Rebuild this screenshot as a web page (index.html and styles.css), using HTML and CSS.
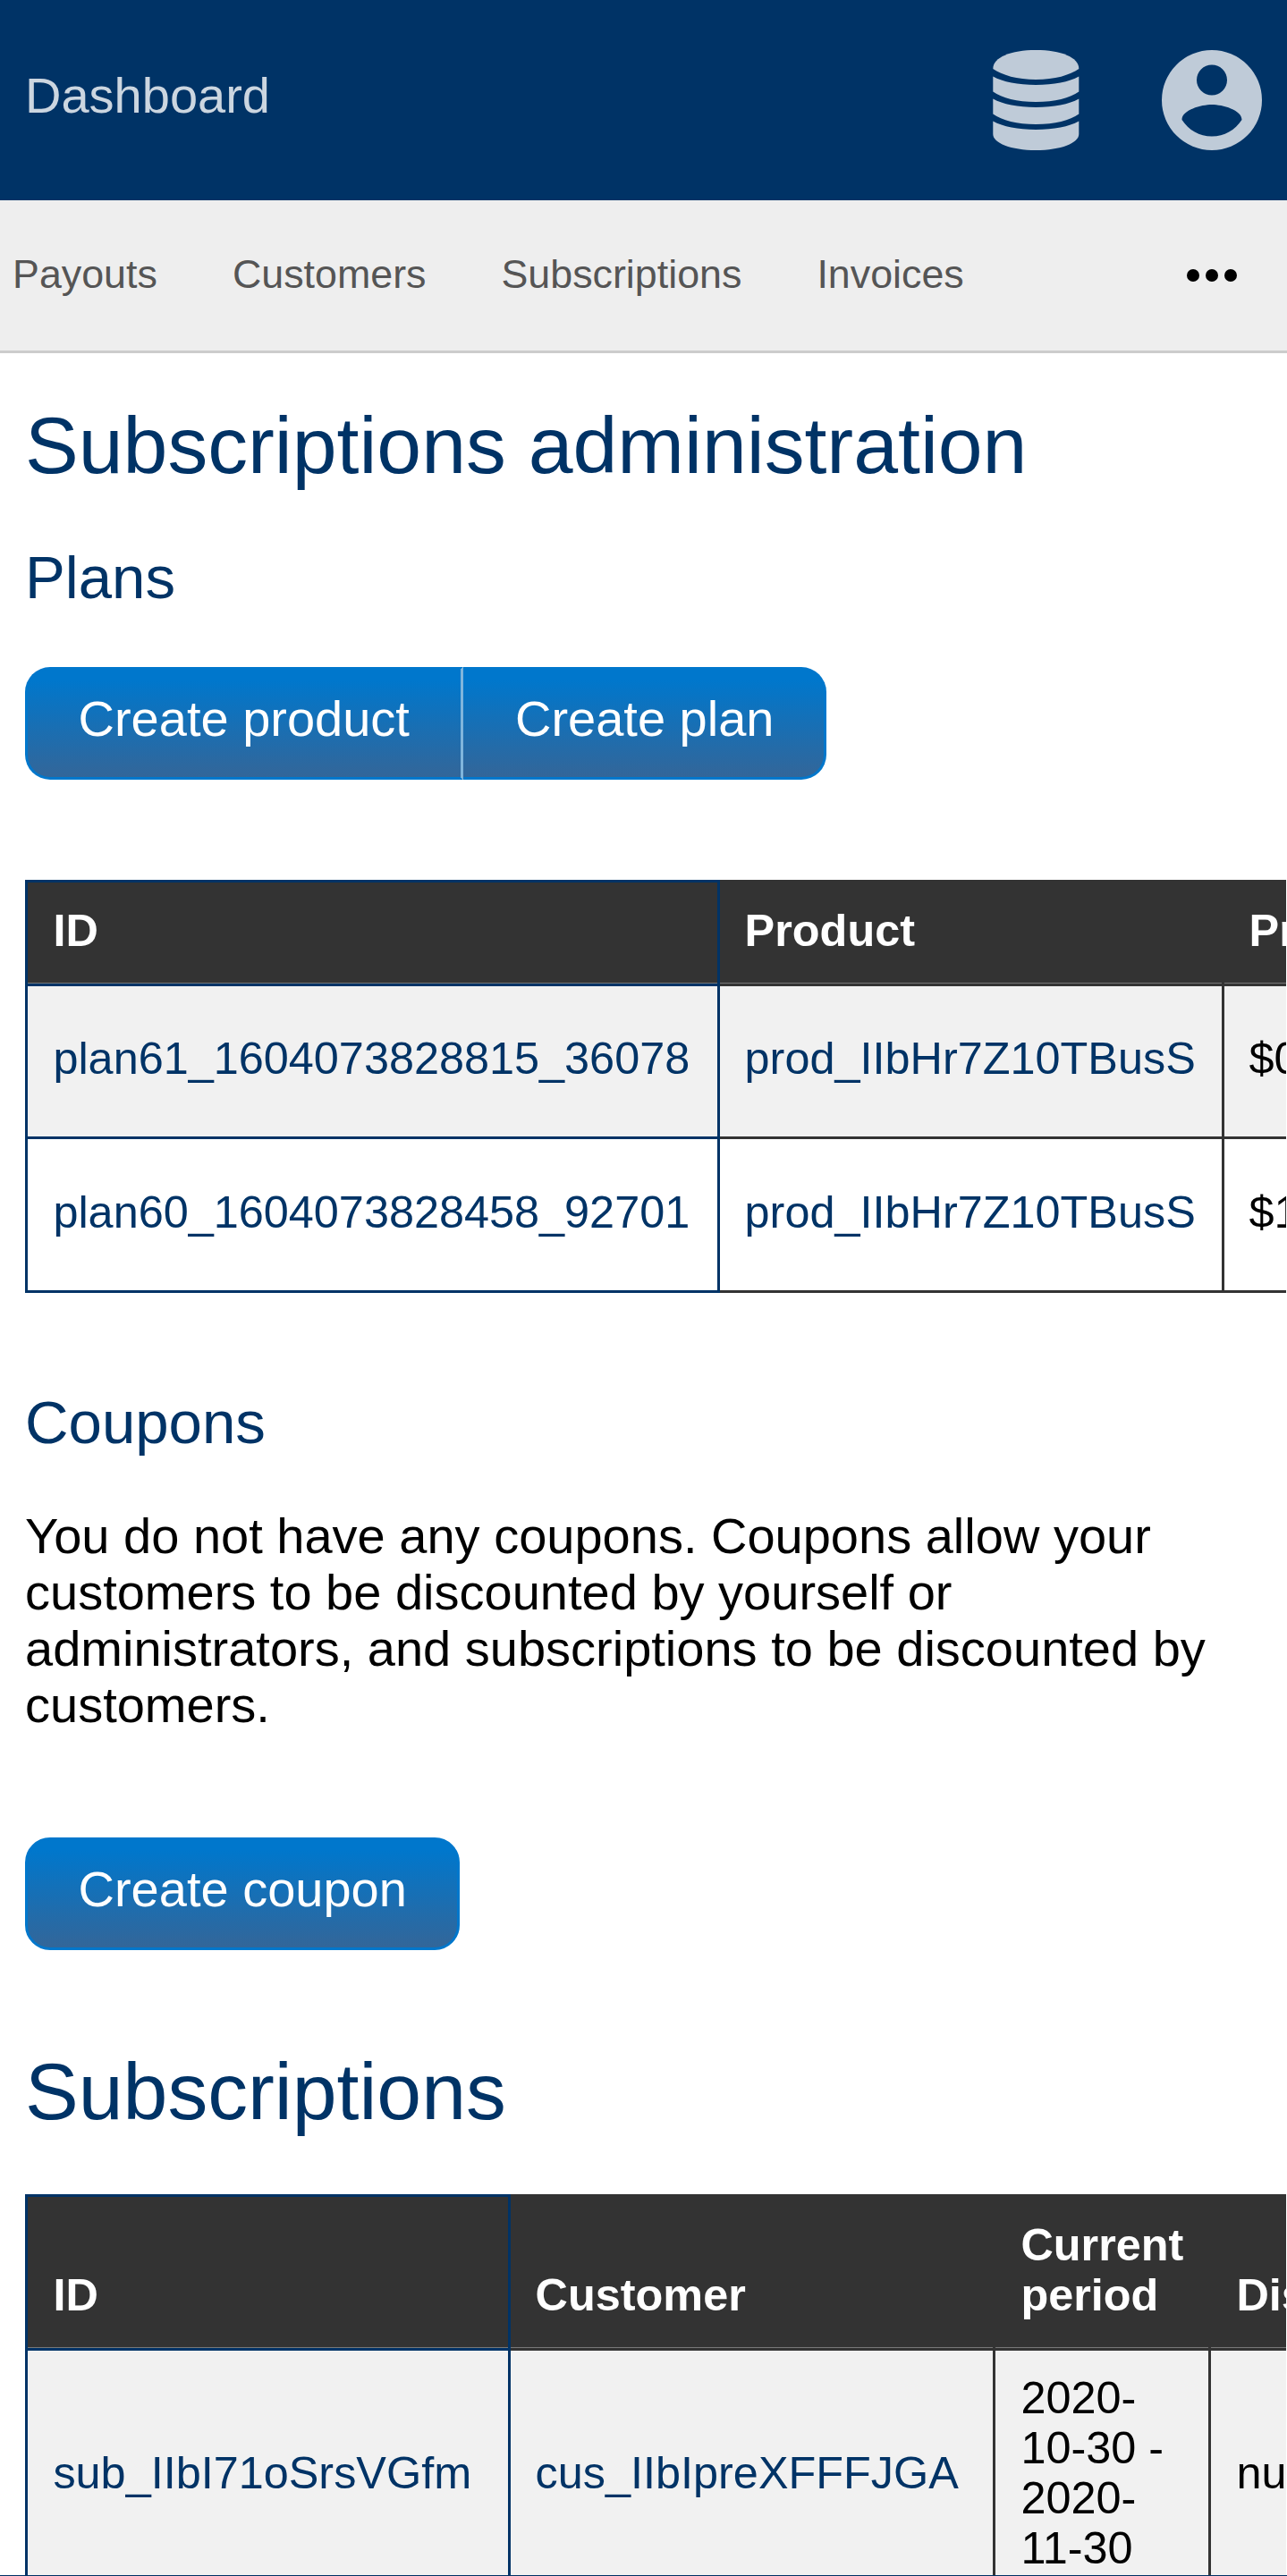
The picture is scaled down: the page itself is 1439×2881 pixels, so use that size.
FILE: index.html
```html
<!DOCTYPE html>
<html lang="en">
<head>
<meta charset="utf-8">
<title>Dashboard</title>
<link rel="stylesheet" href="styles.css">
</head>
<body>
<header class="topbar">
  <a class="brand">Dashboard</a>
  <div class="menus">
    <svg class="icon" viewBox="0 0 112 112"><g fill="#bfcbd8" transform="translate(-.7)"><path d="M8 21C8 8 28 0 56 0s48 8 48 21c-10 7-27 12-48 12S18 28 8 21z"/><path d="M8 29.500c11 6 28 9.500 48 9.500s37-3.500 48-9.500v17C94 53.500 77 58 56 58S18 53.500 8 46.500z"/><path d="M8 54.500c11 6 28 9.500 48 9.500s37-3.500 48-9.500v17C94 78.500 77 83 56 83S18 78.500 8 71.500z"/><path d="M8 79.500c11 6 28 9.500 48 9.500s37-3.500 48-9.500V94c0 10-20 18-48 18S8 104 8 94z"/></g></svg>
    <svg class="icon" viewBox="0 0 112 112"><path fill="#bfcbd8" fill-rule="evenodd" d="M56 0a56 56 0 1 0 0 112A56 56 0 1 0 56 0zM56 16.500a17 17 0 1 1 0 34a17 17 0 1 1 0-34zM56 96.500c-14 0-26-7-33.500-18.500C22.500 67 44 61 56 61s33.500 6 33.500 17C82 89.500 70 96.500 56 96.500z"/></svg>
  </div>
</header>
<nav class="navbar">
  <div class="links"><a>Payouts</a><a>Customers</a><a>Subscriptions</a><a>Invoices</a></div>
  <svg class="dots" viewBox="0 0 56 14"><circle cx="7" cy="7" r="7"/><circle cx="28" cy="7" r="7"/><circle cx="49" cy="7" r="7"/></svg>
</nav>
<main class="content">
  <h1>Subscriptions administration</h1>
  <h2>Plans</h2>
  <div class="buttons"><a>Create product</a><a>Create plan</a></div>
  <table class="plans">
    <colgroup><col class="c-id"><col class="c-product"><col class="c-price"></colgroup>
    <tr><th>ID</th><th>Product</th><th>Price</th></tr>
    <tr class="odd"><td><a>plan61_1604073828815_36078</a></td><td><a>prod_IIbHr7Z10TBusS</a></td><td>$0</td></tr>
    <tr><td><a>plan60_1604073828458_92701</a></td><td><a>prod_IIbHr7Z10TBusS</a></td><td>$10</td></tr>
  </table>
  <h2 class="coupons">Coupons</h2>
  <p>You do not have any coupons. Coupons allow your customers to be discounted by yourself or administrators, and subscriptions to be discounted by customers.</p>
  <div class="buttons coupon-buttons"><a>Create coupon</a></div>
  <h1 class="subs-title">Subscriptions</h1>
  <table class="subs">
    <colgroup><col class="s-id"><col class="s-customer"><col class="s-period"><col class="s-discount"></colgroup>
    <tr><th>ID</th><th>Customer</th><th>Current period</th><th>Discount</th></tr>
    <tr class="odd"><td><a>sub_IIbI71oSrsVGfm</a></td><td><a>cus_IIbIpreXFFFJGA</a></td><td>2020-<br>10-30 -<br>2020-<br>11-30</td><td>null</td></tr>
  </table>
</main>
<div class="edge"></div>
</body>
</html>
```
FILE: styles.css
```css
* { box-sizing: border-box; }
html, body { margin: 0; height: 2881px; overflow: hidden; }
body { position: relative; background: #fff; color: #000; font: 56px/63px "Liberation Sans", Arial, sans-serif; }
.topbar { display: flex; justify-content: space-between; align-items: center; height: 224px; padding: 0 28px; background: #003366; }
.brand { color: #ccd6e0; padding-bottom: 11px; }
.menus { display: flex; gap: 84px; }
.icon { display: block; width: 112px; height: 112px; }
.navbar { display: flex; justify-content: space-between; align-items: center; height: 171px; padding: 0 56px 0 14px; background: #eee; border-bottom: 3px solid #ccc; }
.links { display: flex; gap: 84px; font-size: 44.8px; line-height: 52px; color: #555; padding-bottom: 4px; }
.dots { width: 56px; height: 14px; }
.content { margin-right: 1px; padding-left: 28px; height: 2485px; overflow: hidden; }
h1, h2 { margin: 0; font-weight: 400; color: #003366; white-space: nowrap; }
h1 { font-size: 89.6px; line-height: 102px; padding-top: 52px; }
h2 { font-size: 67.2px; line-height: 76px; padding-top: 59px; }
.buttons { display: flex; width: max-content; margin-top: 62px; }
.buttons a { height: 126px; padding: 23px 56.5px 0; line-height: 63px; color: #fff; background: linear-gradient(#0077cc 10%, #336699); border: 3px solid #0077cc; border-radius: 28px; }
.buttons a:not(:last-child) { padding-right: 57px; border-right-color: #80b5dc; border-radius: 28px 0 0 28px; }
.buttons a + a { padding-left: 58px; padding-right: 56px; border-left: 0; border-radius: 0 28px 28px 0; }
table { table-layout: fixed; border-collapse: collapse; font-size: 50.4px; line-height: 56px; }
.plans { width: 1700px; margin-top: 112px; }
th, td { border: 3px solid #333; padding: 0 28px 6px 28.4px; text-align: left; white-space: nowrap; }
th { background: #333 linear-gradient(#777, #777) 0 100% / 100% 1px no-repeat; color: #fff; vertical-align: bottom; }
th:first-child, td:first-child { border-color: #003366; }
td a { color: #003366; }
.odd td { background: #f1f1f1; }
.plans tr { height: 172px; }
.plans tr.odd { height: 171px; }
.plans tr:first-child { height: 116px; }
th { padding-bottom: 31px; }
th:nth-child(2), td:nth-child(2), .plans th:nth-child(3), .plans td:nth-child(3) { padding-left: 27.6px; }
.c-id { width: 774px; }
.c-product { width: 564px; }
.coupons { padding-top: 107px; }
p { margin: 57px 0 0; width: 1383px; }
.coupon-buttons { margin-top: 117px; }
.subs-title { padding-top: 107px; }
.subs { width: 1700px; margin-top: 64px; }
.subs tr { height: 283px; }
.subs tr:first-child { height: 172px; }
.subs th { white-space: normal; }
.s-id { width: 540px; }
.s-customer { width: 542px; }
.s-period { width: 241px; }
.edge { position: absolute; left: 0; top: 2880px; width: 100%; height: 1px; background: #003366; }
```
